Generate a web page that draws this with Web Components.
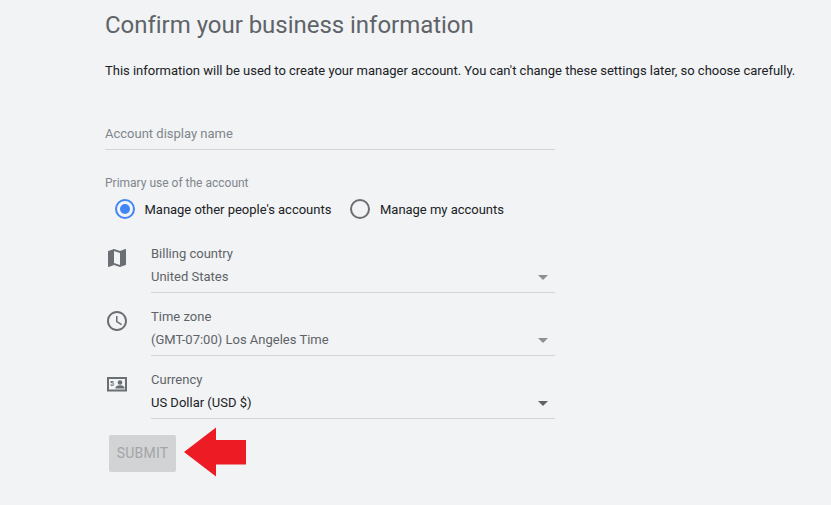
<!DOCTYPE html>
<html><head><meta charset="utf-8">
<style>
html,body{margin:0;padding:0;height:505px;overflow:hidden;background:#f1f3f5;font-family:Roboto,sans-serif}
</style></head><body>
<biz-form>
  <h-title slot="title">Confirm your business information</h-title>
</biz-form>
<template id="tpl-form"><style>
:host{display:block;padding:11px 0 0 105px;width:726px;box-sizing:border-box}
.desc{font-size:13px;line-height:16px;color:#202124;margin-top:24px;white-space:nowrap;letter-spacing:-.01px}
text-line{margin-top:47px}
.use{font-size:12px;line-height:14px;color:#80868b;margin-top:26px}
.radios{display:flex;margin:7px 0 0 10px;height:24px;align-items:center}
.fields{display:flex;flex-direction:column;gap:16px;margin-top:25px}
.actions{display:flex;align-items:center;margin:10px 0 0 4px}
</style>
<slot name="title"></slot>
<div class="desc">This information will be used to create your manager account. You can't change these settings later, so choose carefully.</div>
<text-line>Account display name</text-line>
<div class="use">Primary use of the account</div>
<div class="radios">
  <radio-opt checked style="width:235px">Manage other people's accounts</radio-opt>
  <radio-opt>Manage my accounts</radio-opt>
</div>
<div class="fields">
  <select-field label="Billing country" value="United States" icon="map" dim></select-field>
  <select-field label="Time zone" value="(GMT-07:00) Los Angeles Time" icon="clock" dim></select-field>
  <select-field label="Currency" value="US Dollar (USD $)" icon="id"></select-field>
</div>
<div class="actions">
  <submit-btn>SUBMIT</submit-btn>
  <svg width="62" height="50" viewBox="0 0 62 50" style="margin:-2px 0 0 8px;display:block"><path d="M0 25 32 .5V13H62V37.500H32V49.500Z" fill="#ed1c24"/></svg>
</div>
</template>
<script>
const def=(n,html)=>customElements.define(n,class extends HTMLElement{connectedCallback(){if(this.shadowRoot)return;const r=this.attachShadow({mode:'open'});r.innerHTML=typeof html==='function'?html(this):html;}});
def('h-title',`<style>:host{display:block;font-size:24px;line-height:28px;color:#5f6368;white-space:nowrap;letter-spacing:-.03px}</style><slot></slot>`);
def('text-line',`<style>:host{display:block;width:450px;height:23px;font-size:13px;line-height:16px;color:#80868b;border-bottom:1px solid #d2d4d6;box-sizing:content-box}</style><slot></slot>`);
def('radio-opt',e=>{const c=e.hasAttribute('checked');return `<style>:host{display:flex;align-items:center;font-size:13px;color:#202124;white-space:nowrap;letter-spacing:-.02px}
.o{width:20px;height:20px;box-sizing:border-box;border-radius:50%;border:2px solid ${c?'#4285f4':'#6b6e72'};margin-right:${c?'9.500':'10'}px;display:flex;align-items:center;justify-content:center}
.i{width:10px;height:10px;border-radius:50%;background:#4285f4}</style><span class="o">${c?'<span class="i"></span>':''}</span><slot></slot>`});
const icons={
map:'<path d="M20.5 3h-.2L15 5.1 9 3 3.4 4.9c-.2.1-.4.3-.4.5v15.1c0 .3.2.5.5.5h.2L9 18.9l6 2.1 5.6-1.9c.2-.1.4-.3.4-.5V3.5c0-.3-.2-.5-.5-.5zM15 19l-6-2.1V5l6 2.1V19z"/>',
clock:'<path d="M11.99 2C6.47 2 2 6.48 2 12s4.47 10 9.99 10C17.52 22 22 17.52 22 12S17.52 2 11.99 2zM12 20c-4.42 0-8-3.58-8-8s3.58-8 8-8 8 3.58 8 8-3.58 8-8 8zm.5-13H11v6l5.25 3.15.75-1.23-4.500-2.670V7z"/>',
id:'<path d="M2 5h20v14.500H2zM4 7v10.500h16V7z" fill-rule="evenodd"/><circle cx="15" cy="10.500" r="2.300"/><path d="M10.500 16.500v-.8c0-1.700 3-2.500 4.500-2.500s4.500.8 4.500 2.500v.8z"/><text x="5" y="14" font-size="7" font-family="Roboto,sans-serif" font-weight="700">5</text>'};
def('select-field',e=>{const d=e.hasAttribute('dim');return `<style>:host{display:flex;align-items:flex-start}
svg{width:24px;height:24px;fill:#6b6e72;display:block;flex:none}
.b{margin-left:22px;width:404px;height:46px;border-bottom:1px solid #d2d4d6;position:relative;font-size:13px;line-height:16px}
.l{color:#5f6368}.v{color:${d?'#5f6368':'#202124'};margin-top:7px;white-space:nowrap}
.a{position:absolute;right:7px;top:29px;width:0;height:0;border:5px solid transparent;border-top-color:${d?'#8c8f93':'#5f6368'};border-bottom:0}
</style><svg viewBox="0 0 24 24">${icons[e.getAttribute('icon')]}</svg><div class="b"><div class="l">${e.getAttribute('label')}</div><div class="v">${e.getAttribute('value')}</div><span class="a"></span></div>`});
def('submit-btn',`<style>:host{display:flex;align-items:center;justify-content:center;width:67px;height:37px;border-radius:2px;background:#d2d3d5;color:#a3a5a7;font-size:14px;font-weight:400;letter-spacing:.2px}</style><slot></slot>`);
customElements.define('biz-form',class extends HTMLElement{constructor(){super();this.attachShadow({mode:'open'}).appendChild(document.getElementById('tpl-form').content.cloneNode(true));}});
</script>
</body></html>
